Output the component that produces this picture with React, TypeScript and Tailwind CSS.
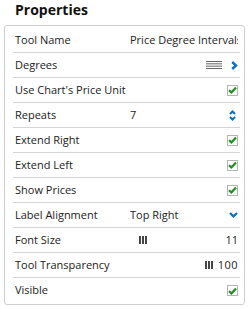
import type { ReactNode } from "react"

function Checkbox() {
  return (
    <span className="flex h-[11px] w-[11px] items-center justify-center border border-[#b5b5b5] bg-white">
      <svg width="9" height="8" viewBox="0 0 9 8">
        <path d="M1 4.2 L3.4 6.4 L8 1.4" fill="none" stroke="#1f8f1f" strokeWidth="2.2" />
      </svg>
    </span>
  )
}

function Handle() {
  return (
    <svg width="8" height="8" viewBox="0 0 8 8">
      <rect x="0" y="0" width="2" height="8" fill="#444" />
      <rect x="3" y="0" width="2" height="8" fill="#444" />
      <rect x="6" y="0" width="2" height="8" fill="#444" />
    </svg>
  )
}

function Row({
  label,
  value,
  right,
  last,
}: {
  label: string
  value?: ReactNode
  right?: ReactNode
  last?: boolean
}) {
  return (
    <div
      className={`flex h-[25px] items-center pl-[2px] pr-[2px] ${
        last ? "" : "border-b border-[#d4d4d4]"
      }`}
    >
      <div className="w-[115px] shrink-0 whitespace-nowrap">{label}</div>
      <div className="min-w-0 flex-1 overflow-hidden whitespace-nowrap">{value}</div>
      {right ? <div className="flex shrink-0 items-center">{right}</div> : null}
    </div>
  )
}

export default function App() {
  return (
    <div
      className="h-[309px] w-[251px] bg-white text-[11px] text-[#222]"
      style={{ fontFamily: '"Open Sans", sans-serif' }}
    >
      <div className="flex h-[25px] items-start pl-[15px] text-[14px] font-bold leading-[19px] text-[#111]">
        Properties
      </div>
      <div className="ml-[4px] w-[241px] rounded-[3px] border border-[#cfcfcf] pb-[1px] pl-[8px] pr-[4px] pt-[2px]">
        <Row
          label="Tool Name"
          value={<span className="-mr-[2px] block">Price Degree Intervals</span>}
        />
        <Row
          label="Degrees"
          right={
            <div className="flex items-center gap-[9px]">
              <svg width="16" height="8" viewBox="0 0 16 8">
                <rect x="0" y="0" width="16" height="1" fill="#666" />
                <rect x="0" y="2.33" width="16" height="1" fill="#666" />
                <rect x="0" y="4.66" width="16" height="1" fill="#666" />
                <rect x="0" y="7" width="16" height="1" fill="#666" />
              </svg>
              <svg width="7" height="9" viewBox="0 0 7 9">
                <path d="M1.2 1 L5 4.5 L1.2 8" fill="none" stroke="#0b6fc4" strokeWidth="2.4" />
              </svg>
            </div>
          }
        />
        <Row label="Use Chart's Price Unit" right={<Checkbox />} />
        <Row
          label="Repeats"
          value="7"
          right={
            <svg width="7" height="11" viewBox="0 0 7 11" className="mr-[2px]">
              <path d="M1 4 L3.5 1.5 L6 4" fill="none" stroke="#0b6fc4" strokeWidth="2" />
              <path d="M1 7 L3.5 9.5 L6 7" fill="none" stroke="#0b6fc4" strokeWidth="2" />
            </svg>
          }
        />
        <Row label="Extend Right" right={<Checkbox />} />
        <Row label="Extend Left" right={<Checkbox />} />
        <Row label="Show Prices" right={<Checkbox />} />
        <Row
          label="Label Alignment"
          value="Top Right"
          right={
            <svg width="9" height="6" viewBox="0 0 9 6">
              <path d="M1 1 L4.5 4.4 L8 1" fill="none" stroke="#0b6fc4" strokeWidth="2.2" />
            </svg>
          }
        />
        <Row
          label="Font Size"
          value={
            <div className="flex items-center pl-[9px]">
              <Handle />
            </div>
          }
          right={<span>11</span>}
        />
        <Row
          label="Tool Transparency"
          value={
            <div className="flex items-center justify-end pr-[5px]">
              <Handle />
            </div>
          }
          right={<span className="tracking-[0.5px]">100</span>}
        />
        <Row label="Visible" right={<Checkbox />} last />
      </div>
    </div>
  )
}
